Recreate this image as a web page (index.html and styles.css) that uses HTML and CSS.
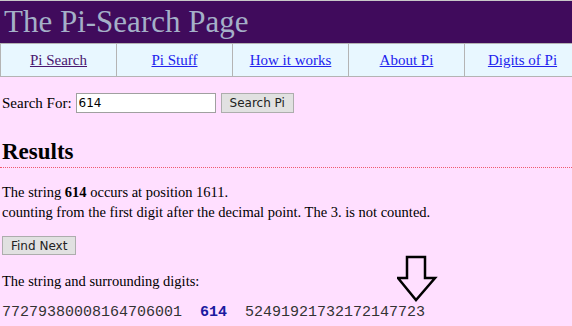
FILE: index.html
```html
<!DOCTYPE html>
<html lang="en">

<head>
    <meta charset="UTF-8">
    <title>The Pi-Search Page</title>
    <link rel="stylesheet" href="styles.css">
</head>

<body>

    <div class="header">
        <h1>The Pi-Search Page</h1>
    </div>

    <div class="nav">
        <div class="nav-cell"><a class="visited" href="#">Pi Search</a></div>
        <div class="nav-cell"><a href="#">Pi Stuff</a></div>
        <div class="nav-cell"><a href="#">How it works</a></div>
        <div class="nav-cell"><a href="#">About Pi</a></div>
        <div class="nav-cell"><a href="#">Digits of Pi</a></div>
    </div>

    <div class="content">
        <form class="search">
            <label for="q">Search For:</label>
            <input id="q" type="text" value="614">
            <button type="button">Search Pi</button>
        </form>

        <h2 class="results">Results</h2>

        <p class="found">The string <b>614</b> occurs at position 1611.<br>
            counting from the first digit after the decimal point. The 3. is not counted.</p>

        <button type="button" class="next">Find Next</button>

        <p class="around">The string and surrounding digits:</p>

        <div class="digits">77279380008164706001  <b>614</b>  52491921732172147723</div>

        <svg class="arrow" width="44" height="50" viewBox="0 0 44 50">
            <path d="M10 2 H28 V23 H38 L19 45 L1 23 H10 Z" fill="none" stroke="black" stroke-width="2.5"
                stroke-linejoin="miter" />
        </svg>
    </div>

</body>

</html>
```

FILE: styles.css
```css
body {
    margin: 0;
    background-color: #ffdfff;
    font-family: "Liberation Serif", "Times New Roman", serif;
    color: black;
    overflow: hidden;
}

.header {
    background-color: #400b5c;
    border-top: 1px solid #c8c8c8;
    height: 42px;
    padding-left: 4px;
}

.header h1 {
    margin: 0;
    font-weight: normal;
    font-size: 31px;
    line-height: 42px;
    color: #a4b0c8;
}

.nav {
    display: grid;
    grid-template-columns: repeat(5, 116px);
    width: 580px;
    background-color: #e8f7ff;
    border-top: 1px solid #b4b4b4;
    border-bottom: 1px solid #b4b4b4;
    border-left: 1px solid #b4b4b4;
}

.nav-cell {
    height: 32px;
    display: flex;
    align-items: center;
    justify-content: center;
    border-right: 1px solid #b4b4b4;
    font-size: 15px;
}

.nav-cell a {
    color: #2222ee;
}

.nav-cell a.visited {
    color: #4a1670;
}

.content {
    position: relative;
    padding: 0 2px;
}

.search {
    display: flex;
    align-items: center;
    margin-top: 16px;
    font-size: 15px;
}

.search input {
    margin: 0 0 0 4px;
    width: 134px;
    height: 14px;
    padding: 2px;
    border: 1px solid #a0a0a0;
    font-family: "DejaVu Sans", Tahoma, sans-serif;
    font-size: 12px;
}

.search button,
.next {
    background-color: #e1e1e1;
    border: 1px solid #adadad;
    font-family: "DejaVu Sans", Tahoma, sans-serif;
    font-size: 12px;
    color: #222;
    padding: 0 8px;
}

.search button {
    margin-left: 5px;
    height: 20px;
}

.results {
    margin: 26px -2px 0;
    padding: 0 2px 2px;
    font-size: 23px;
    border-bottom: 1px dotted #f05a70;
}

.found {
    margin: 14px 0 0;
    font-size: 14.5px;
    line-height: 20px;
}

.next {
    margin-top: 14px;
    height: 19px;
    padding: 0 8px;
}

.around {
    margin: 18px 0 0;
    font-size: 14.5px;
}

.digits {
    margin-top: 14px;
    font-family: "Liberation Mono", "Courier New", monospace;
    font-size: 15px;
    white-space: pre;
    color: #333;
}

.digits b {
    color: #1a1aa0;
}

.arrow {
    position: absolute;
    left: 397px;
    top: 162px;
}
```
